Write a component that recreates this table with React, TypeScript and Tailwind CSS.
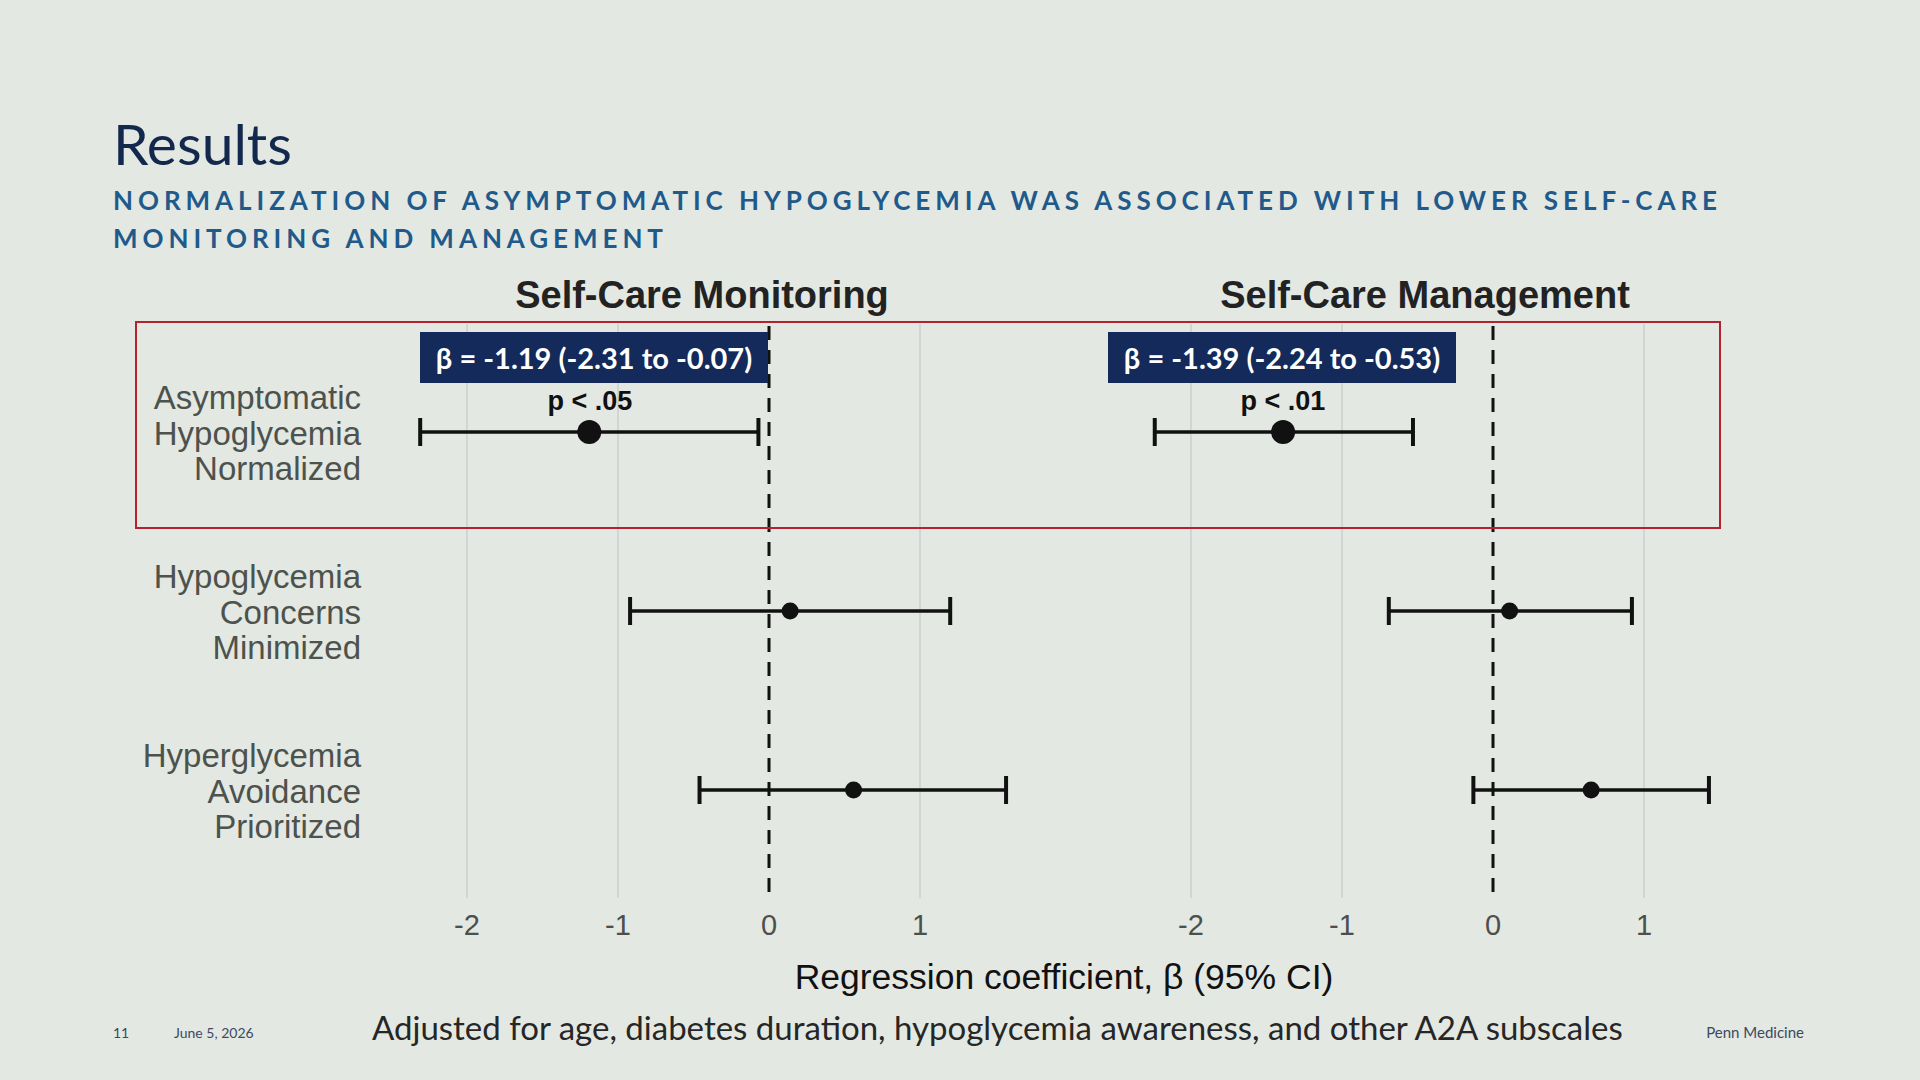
import React from 'react';

// values read off the slide: [lower, estimate, upper]
const rows = [
  { label: ['Asymptomatic', 'Hypoglycemia', 'Normalized'], mon: [-2.31, -1.19, -0.07], man: [-2.24, -1.39, -0.53], big: true },
  { label: ['Hypoglycemia', 'Concerns', 'Minimized'], mon: [-0.92, 0.14, 1.2], man: [-0.69, 0.11, 0.92], big: false },
  { label: ['Hyperglycemia', 'Avoidance', 'Prioritized'], mon: [-0.46, 0.56, 1.57], man: [-0.13, 0.65, 1.43], big: false },
];

const UNIT = 151;
const ROW_Y = [112, 291, 470];

function Panel({ zero, field, width }: { zero: number; field: 'mon' | 'man'; width: number }) {
  const x = (v: number) => zero + v * UNIT;
  return (
    <svg width={width} height="630" viewBox={`0 0 ${width} 630`} className="shrink-0">
      {[-2, -1, 1].map((t) => (
        <line key={t} x1={x(t)} x2={x(t)} y1={4} y2={578} stroke="#d2d6d2" strokeWidth="2" />
      ))}
      <line x1={x(0)} x2={x(0)} y1={6} y2={580} stroke="#111" strokeWidth="3" strokeDasharray="14 10" />
      {rows.map((r, i) => {
        const [lo, est, hi] = r[field];
        const y = ROW_Y[i];
        return (
          <g key={i}>
            <line x1={x(lo)} x2={x(hi)} y1={y} y2={y} stroke="#111" strokeWidth="3.5" />
            <line x1={x(lo)} x2={x(lo)} y1={y - 14} y2={y + 14} stroke="#111" strokeWidth="4" />
            <line x1={x(hi)} x2={x(hi)} y1={y - 14} y2={y + 14} stroke="#111" strokeWidth="4" />
            <circle cx={x(est)} cy={y} r={r.big ? 12 : 8.5} fill="#111" />
          </g>
        );
      })}
      {[-2, -1, 0, 1].map((t) => (
        <text
          key={t}
          x={x(t)}
          y={605}
          textAnchor="middle"
          dominantBaseline="central"
          fontSize="29"
          fill="#4d4f4d"
          fontFamily="'Liberation Sans', Arial, sans-serif"
        >
          {t}
        </text>
      ))}
    </svg>
  );
}

export default function App() {
  return (
    <div className="w-[1920px] h-[1080px] overflow-hidden bg-[#e3e8e2] font-['Lato',sans-serif]">
      {/* Title */}
      <div className="pl-[113px] pt-[113px]">
        <h1 className="text-[57px] leading-[60px] text-[#13284d]">Results</h1>
        <p className="mt-[8px] text-[26px] leading-[38px] font-bold tracking-[0.19em] text-[#1f5a8b] whitespace-nowrap">
          NORMALIZATION OF ASYMPTOMATIC HYPOGLYCEMIA WAS ASSOCIATED WITH LOWER SELF-CARE
          <br />
          MONITORING AND MANAGEMENT
        </p>
      </div>

      {/* Panel headings */}
      <div className="mt-[19px] flex font-['Liberation_Sans',Arial,sans-serif] text-[38px] leading-none font-bold text-[#222]">
        <div className="w-[361px] shrink-0" />
        <div className="w-[640px] shrink-0 pl-[42px] text-center">Self-Care Monitoring</div>
        <div className="ml-[79px] w-[640px] shrink-0 pl-[50px] text-center">Self-Care Management</div>
      </div>

      {/* Plot */}
      <div className="relative mt-[6px] flex h-[630px]">
        <div className="w-[361px] shrink-0 pt-[24px] flex flex-col font-['Liberation_Sans',Arial,sans-serif] text-[33px] leading-[35.5px] text-[#4d524d]">
          {rows.map((r) => (
            <div key={r.label[0] + r.label[1]} className="h-[179px] flex flex-col items-end justify-center text-right">
              {r.label.map((l) => (
                <span key={l}>{l}</span>
              ))}
            </div>
          ))}
        </div>
        <Panel zero={408} field="mon" width={690} />
        <div className="w-[29px] shrink-0" />
        <Panel zero={413} field="man" width={640} />

        {/* highlighted row */}
        <div className="absolute left-[135px] top-[1px] w-[1586px] h-[208px] border-2 border-[#b3222e]" />

        {/* annotations */}
        <div className="absolute left-[420px] top-[12px] w-[348px] h-[51px] bg-[#142a5a] flex items-center justify-center text-white font-bold text-[29px]">
          β = -1.19 (-2.31 to -0.07)
        </div>
        <div className="absolute left-[1108px] top-[12px] w-[348px] h-[51px] bg-[#142a5a] flex items-center justify-center text-white font-bold text-[29px]">
          β = -1.39 (-2.24 to -0.53)
        </div>
        <div className="absolute left-[540px] top-[67px] w-[100px] text-center font-['Liberation_Sans',Arial,sans-serif] font-bold text-[27px] leading-[28px] text-[#111]">
          p &lt; .05
        </div>
        <div className="absolute left-[1233px] top-[67px] w-[100px] text-center font-['Liberation_Sans',Arial,sans-serif] font-bold text-[27px] leading-[28px] text-[#111]">
          p &lt; .01
        </div>
      </div>

      {/* Axis title */}
      <div className="mt-[10px] flex justify-center pl-[208px] font-['Liberation_Sans',Arial,sans-serif] text-[35.5px] leading-none text-[#111]">
        Regression coefficient, β (95% CI)
      </div>

      {/* Footer */}
      <div className="mt-[15px] flex items-center pl-[113px] pr-[116px]">
        <span className="w-[61px] translate-y-[5px] text-[14px] text-[#3b4a66]">11</span>
        <span className="w-[198px] translate-y-[5px] text-[14px] text-[#3b4a66]">June 5, 2026</span>
        <span className="text-[33px] leading-none text-[#262626]">
          Adjusted for age, diabetes duration, hypoglycemia awareness, and other A2A subscales
        </span>
        <span className="ml-auto translate-y-[5px] text-[15px] text-[#3b4a60]">Penn Medicine</span>
      </div>
    </div>
  );
}
